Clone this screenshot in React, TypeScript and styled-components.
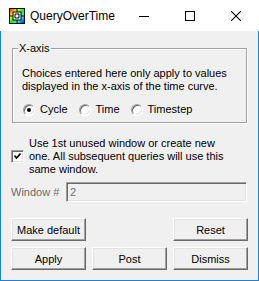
import styled, { createGlobalStyle } from "styled-components";

const GlobalStyle = createGlobalStyle`
  html, body {
    margin: 0;
    padding: 0;
    background: #ffffff;
  }
  * {
    box-sizing: border-box;
  }
`;

const Window = styled.div`
  width: 259px;
  height: 281px;
  display: flex;
  flex-direction: column;
  overflow: hidden;
  font-family: "Liberation Sans", Arial, sans-serif;
  font-size: 11px;
  color: #000;
`;

const TitleBar = styled.div`
  height: 31px;
  flex: none;
  display: flex;
  align-items: center;
  background: #ffffff;
`;

const AppIcon = styled.svg`
  width: 16px;
  height: 16px;
  margin-left: 9px;
  flex: none;
`;

const Title = styled.span`
  margin-left: 5px;
  font-size: 12px;
  color: #000;
  flex: 1;
`;

const CaptionButton = styled.div`
  width: 46px;
  height: 31px;
  display: flex;
  align-items: center;
  justify-content: center;
`;

const Body = styled.div`
  flex: 1;
  display: flex;
  flex-direction: column;
  background: #f0f0f0;
  border: 1px solid #1883d7;
  border-top: none;
  padding: 11px 10px 10px;
`;

const GroupBox = styled.fieldset`
  margin: 0 1px;
  padding: 12px 9px 6px;
  border: 1px solid #a0a0a0;
  box-shadow: inset 1px 1px #ffffff, 1px 1px #ffffff;
`;

const Legend = styled.legend`
  margin-left: -4px;
  padding: 0 1px;
  line-height: 13px;
`;

const Note = styled.p`
  margin: 0;
  line-height: 13px;
`;

const RadioRow = styled.div`
  display: flex;
  align-items: center;
  gap: 11px;
  margin-top: 10px;
  padding-left: 1px;
  line-height: 13px;
`;

const RadioOption = styled.label`
  display: flex;
  align-items: center;
  gap: 5px;
`;

const RadioCircle = styled.span<{ $checked?: boolean }>`
  width: 12px;
  height: 12px;
  border-radius: 50%;
  background: #ffffff;
  border: 1px solid;
  border-color: #a0a0a0 #ffffff #ffffff #a0a0a0;
  box-shadow: inset 1px 1px #696969, inset -1px -1px #e3e3e3;
  display: flex;
  align-items: center;
  justify-content: center;

  &::after {
    content: "";
    width: 4px;
    height: 4px;
    border-radius: 50%;
    background: ${(p) => (p.$checked ? "#000" : "transparent")};
  }
`;

const CheckRow = styled.div`
  display: flex;
  align-items: center;
  gap: 5px;
  margin-top: 14px;
`;

const CheckBox = styled.span`
  width: 13px;
  height: 13px;
  flex: none;
  background: #ffffff;
  border: 1px solid;
  border-color: #a0a0a0 #ffffff #ffffff #a0a0a0;
  box-shadow: inset 1px 1px #696969, inset -1px -1px #e3e3e3;
  display: flex;
  align-items: center;
  justify-content: center;
`;

const CheckText = styled.span`
  line-height: 13px;
`;

const FieldRow = styled.div`
  display: flex;
  align-items: center;
  margin-top: 6px;
`;

const FieldLabel = styled.span`
  width: 55px;
  color: #6d6d6d;
`;

const TextField = styled.div`
  flex: 1;
  height: 20px;
  margin-right: 1px;
  padding: 0 3px;
  display: flex;
  align-items: center;
  color: #6d6d6d;
  background: #f0f0f0;
  border: 1px solid;
  border-color: #a0a0a0 #ffffff #ffffff #a0a0a0;
  box-shadow: inset 1px 1px #696969, inset -1px -1px #e3e3e3;
`;

const ButtonGrid = styled.div`
  display: grid;
  grid-template-columns: repeat(3, 75px);
  grid-auto-rows: 23px;
  column-gap: 6px;
  row-gap: 6px;
  margin-top: 16px;
`;

const Button = styled.button<{ $col?: number }>`
  grid-column: ${(p) => p.$col ?? "auto"};
  margin: 0;
  padding: 0;
  font-family: inherit;
  font-size: 11px;
  color: #000;
  background: #f0f0f0;
  border: 1px solid;
  border-color: #ffffff #696969 #696969 #ffffff;
  box-shadow: inset -1px -1px #a0a0a0, inset 1px 1px #e3e3e3;
`;

function Icon() {
  return (
    <AppIcon viewBox="0 0 16 16">
      <defs>
        <linearGradient id="rb" x1="0" y1="0" x2="1" y2="1">
          <stop offset="0" stopColor="#ff0000" />
          <stop offset="0.3" stopColor="#ffff00" />
          <stop offset="0.5" stopColor="#00ff00" />
          <stop offset="0.7" stopColor="#00ffff" />
          <stop offset="1" stopColor="#0000ff" />
        </linearGradient>
      </defs>
      <rect x="0.5" y="0.5" width="15" height="15" fill="url(#rb)" stroke="#000" />
      <rect x="4" y="4" width="8" height="8" fill="#fff" stroke="#000" />
      <path d="M8 1v3M8 12v3M1 8h3M12 8h3M6 6h4v4H6z" stroke="#000" fill="none" />
    </AppIcon>
  );
}

export default function App() {
  return (
    <>
      <GlobalStyle />
      <Window>
        <TitleBar>
          <Icon />
          <Title>QueryOverTime</Title>
          <CaptionButton>
            <svg width="10" height="10" viewBox="0 0 10 10">
              <path d="M0 5.5h10" stroke="#000" />
            </svg>
          </CaptionButton>
          <CaptionButton>
            <svg width="10" height="10" viewBox="0 0 10 10">
              <rect x="0.5" y="0.5" width="9" height="9" stroke="#000" fill="none" />
            </svg>
          </CaptionButton>
          <CaptionButton>
            <svg width="10" height="10" viewBox="0 0 10 10">
              <path d="M0 0L10 10M10 0L0 10" stroke="#000" strokeWidth="1.1" />
            </svg>
          </CaptionButton>
        </TitleBar>
        <Body>
          <GroupBox>
            <Legend>X-axis</Legend>
            <Note>
              Choices entered here only apply to values
              <br />
              displayed in the x-axis of the time curve.
            </Note>
            <RadioRow>
              <RadioOption>
                <RadioCircle $checked />
                Cycle
              </RadioOption>
              <RadioOption>
                <RadioCircle />
                Time
              </RadioOption>
              <RadioOption>
                <RadioCircle />
                Timestep
              </RadioOption>
            </RadioRow>
          </GroupBox>
          <CheckRow>
            <CheckBox>
              <svg width="7" height="7" viewBox="0 0 7 7">
                <path d="M0.5 2.5l2 2.5 4-4.5" stroke="#000" strokeWidth="1.6" fill="none" />
              </svg>
            </CheckBox>
            <CheckText>
              Use 1st unused window or create new
              <br />
              one. All subsequent queries will use this
              <br />
              same window.
            </CheckText>
          </CheckRow>
          <FieldRow>
            <FieldLabel>Window #</FieldLabel>
            <TextField>2</TextField>
          </FieldRow>
          <ButtonGrid>
            <Button>Make default</Button>
            <Button $col={3}>Reset</Button>
            <Button>Apply</Button>
            <Button>Post</Button>
            <Button>Dismiss</Button>
          </ButtonGrid>
        </Body>
      </Window>
    </>
  );
}
